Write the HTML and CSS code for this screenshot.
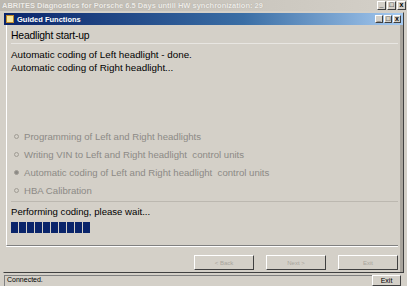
FILE: index.html
```html
<!DOCTYPE html>
<html>
<head>
    <title>Guided Functions</title>
    <link rel="stylesheet" href="styles.css">
</head>
<body>
    <!-- Application caption (inactive) -->
    <div class="app-title">
        <span>ABRITES Diagnostics for Porsche 6.5 Days untill HW synchronization: 29</span>
        <div class="caption-buttons small">
            <span class="cap-btn">_</span><span class="cap-btn">&#9633;</span><span class="cap-btn">x</span>
        </div>
    </div>

    <!-- Guided Functions child window -->
    <div class="window">
        <div class="win-title">
            <span class="win-icon"></span>
            <span class="win-caption">Guided Functions</span>
            <div class="caption-buttons">
                <span class="cap-btn">_</span><span class="cap-btn">&#9633;</span><span class="cap-btn">x</span>
            </div>
        </div>

        <div class="win-body">
            <div class="panel">
                <div class="panel-head">Headlight start-up</div>
                <div class="messages">
                    <div>Automatic coding of Left headlight - done.</div>
                    <div>Automatic coding of Right headlight...</div>
                </div>

                <div class="steps">
                    <div class="step"><span class="radio"></span>Programming of Left and Right headlights</div>
                    <div class="step"><span class="radio"></span>Writing VIN to Left and Right headlight&nbsp; control units</div>
                    <div class="step"><span class="radio checked"></span>Automatic coding of Left and Right headlight&nbsp; control units</div>
                    <div class="step"><span class="radio"></span>HBA Calibration</div>
                </div>

                <div class="status-area">
                    <div class="status-text">Performing coding, please wait...</div>
                    <div class="progress">
                        <span></span><span></span><span></span><span></span><span></span>
                        <span></span><span></span><span></span><span></span><span></span>
                    </div>
                </div>
            </div>

            <div class="nav-buttons">
                <button class="btn" disabled>&lt; Back</button>
                <button class="btn" disabled>Next &gt;</button>
                <button class="btn" disabled>Exit</button>
            </div>
        </div>
    </div>

    <!-- Status bar -->
    <div class="statusbar">
        <span class="status-cell">Connected.</span>
        <button class="exit-btn">Exit</button>
    </div>
</body>
</html>
```

FILE: styles.css
```css
/* Classic window look */
body {
    margin: 0;
    width: 407px;
    height: 286px;
    overflow: hidden;
    background-color: #d4d0c8;
    font-family: Tahoma, "Liberation Sans", "DejaVu Sans", sans-serif;
    color: #000000;
    display: flex;
    flex-direction: column;
}

.app-title {
    height: 11px;
    display: flex;
    align-items: center;
    justify-content: space-between;
    padding: 0 1px 0 2px;
    background: linear-gradient(to right, #bcb8b0, #d4d0c8);
    color: #eeece8;
    font-size: 7.5px;
    font-weight: bold;
    text-shadow: 0 0 1px #a09c94;
}

.caption-buttons {
    display: flex;
    gap: 1px;
}

.cap-btn {
    width: 8px;
    height: 8px;
    background-color: #d4d0c8;
    border: 1px solid;
    border-color: #ffffff #404040 #404040 #ffffff;
    font-size: 7px;
    line-height: 6px;
    text-align: center;
    font-weight: bold;
    color: #000000;
    text-shadow: none;
    box-sizing: border-box;
}

.caption-buttons.small .cap-btn {
    width: 9px;
    height: 9px;
}

.window {
    flex: 1;
    margin: 1px 3px 0 3px;
    border: 1px solid;
    border-color: #d4d0c8 #404040 #404040 #d4d0c8;
    display: flex;
    flex-direction: column;
}

.win-title {
    height: 12px;
    display: flex;
    align-items: center;
    gap: 3px;
    padding: 0 2px;
    background: linear-gradient(to right, #0a246a, #3a6ea5 60%, #a6caf0);
    color: #ffffff;
    font-size: 7.5px;
    font-weight: bold;
}

.win-icon {
    width: 8px;
    height: 8px;
    background-color: #f6e7a0;
    border: 1px solid #c08a2a;
    box-sizing: border-box;
}

.win-caption {
    flex: 1;
}

.win-body {
    flex: 1;
    display: flex;
    flex-direction: column;
    padding: 0 2px 0 2px;
    border-right: 3px solid #a8a49c;
}

.panel {
    border-bottom: 1px solid #808080;
    box-shadow: 0 1px 0 #ffffff;
    border-left: 1px solid #ffffff;
    padding-left: 4px;
}

.panel-head {
    font-size: 10.4px;
    line-height: 14px;
    letter-spacing: -0.2px;
    padding-top: 4px;
    border-bottom: 1px solid #e8e6e2;
}

.messages {
    font-size: 9.8px;
    line-height: 13px;
    padding-top: 4px;
    height: 79px;
}

.steps {
    color: #8c8a86;
    font-size: 9.6px;
    border-bottom: 1px solid #bcb8b0;
    padding-bottom: 2px;
}

.step {
    height: 18px;
    display: flex;
    align-items: center;
    padding-left: 3px;
}

.radio {
    width: 5px;
    height: 5px;
    border-radius: 50%;
    border: 1px solid #a09c94;
    margin-right: 5px;
    box-sizing: border-box;
}

.radio.checked {
    background-color: #8c8a86;
}

.status-area {
    padding: 3px 0 12px 0;
}

.status-text {
    font-size: 9.6px;
    line-height: 13px;
}

.progress {
    display: flex;
    gap: 1px;
    margin-top: 4px;
    height: 11px;
}

.progress span {
    width: 7px;
    background-color: #0a246a;
}

.nav-buttons {
    display: flex;
    justify-content: flex-end;
    gap: 12px;
    padding: 9px 0 0 0;
}

.btn {
    width: 60px;
    height: 15px;
    background-color: #d4d0c8;
    border: 1px solid;
    border-color: #ffffff #404040 #404040 #ffffff;
    color: #a8a49c;
    font-family: inherit;
    font-size: 6px;
    padding: 0;
}

.statusbar {
    height: 13px;
    display: flex;
    align-items: flex-end;
    justify-content: space-between;
    padding: 0 6px 0 4px;
}

.status-cell {
    flex: 1;
    font-size: 7px;
    border-top: 1px solid #808080;
    border-left: 1px solid #808080;
    padding-left: 2px;
    height: 10px;
}

.exit-btn {
    width: 29px;
    height: 11px;
    background-color: #d4d0c8;
    border: 1px solid;
    border-color: #ffffff #404040 #404040 #ffffff;
    font-family: inherit;
    font-size: 7px;
    padding: 0;
}
```
